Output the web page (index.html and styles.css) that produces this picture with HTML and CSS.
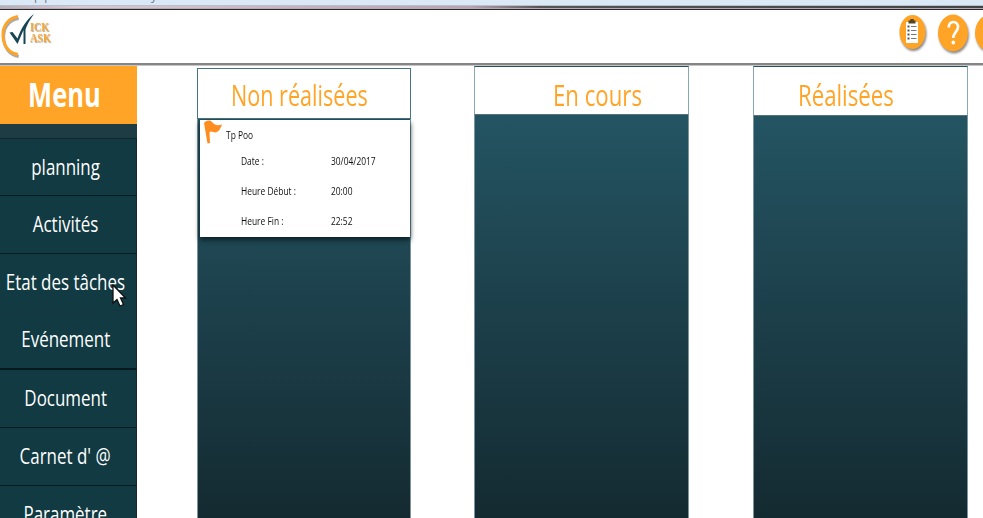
FILE: index.html
```html
<!DOCTYPE html>
<html lang="fr">
<head>
<meta charset="utf-8">
<title>Tick Task</title>
<link rel="stylesheet" href="styles.css">
</head>
<body>
<div class="chrome"><span class="pp">pp</span><span>y</span></div>
<header class="topbar">
  <div class="logo">
    <svg class="mark" width="36" height="46" viewBox="0 0 36 46">
      <path d="M18 3.500C8 5 2.500 13 3 23c.4 10 6 17 15 18.500" fill="none" stroke="#aaa" stroke-width="3" transform="translate(.7 1)"/>
      <path d="M18 2.500C8 4 2.500 12 3 22c.4 10 6 17 15 18.500" fill="none" stroke="#ffa426" stroke-width="3"/>
      <path d="M9.500 18.500l3-.5 5 6.500C21 14 27 5 34 0 29 7 26 13 25.500 16v14h-2V16l-6 14z" fill="#174653"/>
    </svg>
    <div class="word"><span>ICK</span><span>ASK</span></div>
  </div>
  <div class="tools">
    <svg class="tool small" width="27" height="36" viewBox="0 0 27 36">
      <ellipse cx="13.500" cy="18" rx="13" ry="17" fill="#ffa426"/>
      <path d="M7 8h12v21H7z" fill="#fff"/>
      <path d="M9.500 6.500h1.500l.5-1.500h3l.5 1.500h1.500V9.500h-7z" fill="#554525"/>
      <path d="M8.500 12.500h2m-2 4h2m-2 4h2m-2 4h2" stroke="#555" stroke-width="2"/>
      <path d="M12 12.500h5.500m-5.500 4h5.500m-5.500 4h5.500m-5.500 4h5.500" stroke="#777" stroke-width="1"/>
    </svg>
    <svg class="tool" width="30" height="38" viewBox="0 0 30 38">
      <ellipse cx="15" cy="19" rx="15" ry="18.500" fill="#ffa426"/>
      <path d="M10.800 13.500c0-3.800 1.800-5.500 4.500-5.500s4.700 2 4.700 5c0 4.500-4.700 5.500-4.700 11" fill="none" stroke="#fff" stroke-width="2.600"/>
      <ellipse cx="15.300" cy="28.500" rx="1.800" ry="2" fill="#fff"/>
    </svg>
    <svg class="tool" width="30" height="38" viewBox="0 0 30 38">
      <ellipse cx="15" cy="19" rx="15" ry="18.500" fill="#ffa426"/>
    </svg>
  </div>
</header>
<div class="main">
  <nav class="menu">
    <h1 class="menu-title"><span>Menu</span></h1>
    <div class="menu-gap"></div>
    <a class="item short"><span>planning</span></a>
    <a class="item"><span>Activités</span></a>
    <a class="item short faint"><span>Etat des tâches</span></a>
    <a class="item thick"><span>Evénement</span></a>
    <a class="item"><span>Document</span></a>
    <a class="item"><span>Carnet d' @</span></a>
    <a class="item"><span>Paramètre</span></a>
    <svg class="cursor" width="15" height="24" viewBox="0 0 15 24">
      <path d="M1 1v18l4-3.500 3 6.500 3.500-1.500-3-6.500h5z" fill="#fff" stroke="#111" stroke-width="1.300"/>
    </svg>
  </nav>
  <main class="board">
    <section class="column todo">
      <h2><span>Non réalisées</span></h2>
      <div class="lane">
        <article class="card">
          <div class="card-head">
            <svg width="20" height="25" viewBox="0 0 20 25">
              <path d="M1 3C4 0 7 0 9 2c3 3.500 6 4 10 2.500-2 6-5 9-8.500 7.500-2-1-3.500-.5-4 .5L7 23l-2.500.5z" fill="#ff8c1f"/>
            </svg>
            <span>Tp Poo</span>
          </div>
          <dl>
            <dt><span>Date :</span></dt><dd><span>30/04/2017</span></dd>
            <dt><span>Heure Début :</span></dt><dd><span>20:00</span></dd>
            <dt><span>Heure Fin :</span></dt><dd><span>22:52</span></dd>
          </dl>
        </article>
      </div>
    </section>
    <section class="column doing">
      <h2><span>En cours</span></h2>
      <div class="lane"></div>
    </section>
    <section class="column done">
      <h2><span>Réalisées</span></h2>
      <div class="lane"></div>
    </section>
  </main>
</div>
</body>
</html>
```
FILE: styles.css
```css
* { box-sizing: border-box; }
body {
  margin: 0;
  height: 518px;
  overflow: hidden;
  display: flex;
  flex-direction: column;
  background: #fff;
  font-family: "Open Sans", "Noto Sans", sans-serif;
}
h1, h2, dl, dd { margin: 0; font-weight: 400; }
span { display: inline-block; white-space: nowrap; }

.chrome {
  flex: none;
  height: 10px;
  display: flex;
  overflow: hidden;
  padding-left: 34px;
  background: linear-gradient(#dbe8f5 0 5px, #b9c0cb 5px 6px, transparent 6px 8px, #b5aab3 8px 9px, #292929 9px),
    linear-gradient(90deg, #b6aeb8, #d9c8d2 8%, #b8a2b0 48%, #555 55%, #444);
}
.chrome span { font-size: 12px; line-height: 12px; color: #6a7887; transform: translateY(-10px); }
.chrome .pp { width: 117px; letter-spacing: 3px; }

.topbar {
  flex: none;
  height: 56px;
  display: flex;
  justify-content: space-between;
  background: linear-gradient(#fff 0 53px, #858585 53px 55px, #c5c5c5 55px);
}
.logo { display: flex; padding-top: 3px; }
.mark { margin-top: 1px; }
.word {
  display: flex;
  flex-direction: column;
  width: 22px;
  margin: 8px 0 0 -6px;
  font: 700 13px/11px "Liberation Serif", serif;
  color: #f8a737;
  text-shadow: 1px 1px 1px #aaa;
}
.word span { transform: scaleX(.78); transform-origin: left; }
.tools {
  display: flex;
  gap: 7px;
  width: 84px;
  padding-top: 4px;
  overflow: hidden;
}
.tool { flex: none; filter: drop-shadow(1px 2px 1px #888); }
.tool.small { margin-right: 5px; }

.main { flex: 1; display: flex; min-height: 0; }
.menu {
  position: relative;
  flex: none;
  width: 137px;
  height: 452px;
  overflow: hidden;
  background: #113a42;
  color: #fff;
  text-align: center;
}
.menu-title {
  height: 58px;
  background: #ffa426;
  font-size: 34px;
  line-height: 57px;
}
.menu-title span { font-weight: 700; transform: translateX(-4px) scaleX(.75); }
.menu-gap { height: 15px; background: #1d3c43; border-bottom: 1px solid #12282e; }
.item {
  display: flex;
  justify-content: center;
  height: 58px;
  padding-right: 7px;
  border-bottom: 1px solid #061d22;
  border-right: 1px solid #16282e;
  font-size: 22px;
  line-height: 55px;
}
.item.short { height: 57px; }
.item span { transform: translateX(1px) scaleX(.77); }
.item.faint { border-bottom-color: #16363e; }
.item.thick { height: 59px; border-bottom: 2px solid #061a1e; }
.cursor { position: absolute; left: 112px; top: 218px; }

.board { display: flex; padding-left: 60px; }
.column {
  flex: none;
  width: 214px;
  display: flex;
  flex-direction: column;
}
.column.doing { width: 215px; margin-left: 63px; }
.column.done { width: 215px; margin-left: 64px; }
.column h2 {
  height: 50px;
  background: #fff;
  border: 1px solid #8aa7b1;
  border-top-color: #24525f;
  border-bottom-color: #57707a;
  color: #ffa426;
  font-size: 30px;
  line-height: 56px;
}
.column h2 span { transform: scaleX(.74); transform-origin: left; }
.todo { padding-top: 2px; }
.column.todo h2 { height: 51px; border-color: #477581; padding-left: 33px; line-height: 52px; }
.column.todo h2 span { transform: scaleX(.72); }
.doing h2 { height: 49px; padding-left: 78px; }
.done h2 { padding-left: 44px; }
.lane {
  flex: 1;
  border: solid #7c949c;
  border-width: 0 1px;
  background: linear-gradient(#245462, #142a31);
}
.card {
  width: 210px;
  height: 117px;
  margin: 1px 0 0 2px;
  background: #fff;
  box-shadow: 0 3px 5px #0b2027;
  color: #111;
  font-size: 11px;
}
.card span { transform: scaleX(.765); transform-origin: left; }
.card-head { display: flex; padding-left: 3px; height: 26px; }
.card-head span { margin-left: 3px; line-height: 29px; }
dl {
  display: grid;
  grid-template-columns: 90px 1fr;
  grid-auto-rows: 30px;
  padding-left: 41px;
  line-height: 30px;
}
```
